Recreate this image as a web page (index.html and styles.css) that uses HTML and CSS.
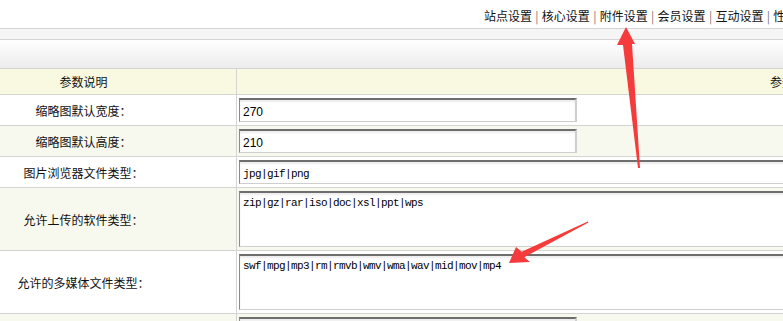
FILE: index.html
```html
<!DOCTYPE html>
<html lang="zh-CN">
<head>
    <meta charset="UTF-8">
    <title>附件设置</title>
    <link rel="stylesheet" href="styles.css">
</head>
<body>
    <div class="topbar">
        <div class="nav">
            <a href="#">站点设置</a><span class="sep">|</span><a href="#">核心设置</a><span class="sep">|</span><a href="#">附件设置</a><span class="sep">|</span><a href="#">会员设置</a><span class="sep">|</span><a href="#">互动设置</a><span class="sep">|</span><a href="#">性能选项</a>
        </div>
    </div>
    <div class="subbar"></div>
    <div class="toolbar"></div>
    <table class="config">
        <tr class="head">
            <td class="label">参数说明</td>
            <td class="value-head">参数值</td>
        </tr>
        <tr>
            <td class="label">缩略图默认宽度：</td>
            <td class="value"><input type="text" class="short" value="270"></td>
        </tr>
        <tr class="alt">
            <td class="label">缩略图默认高度：</td>
            <td class="value"><input type="text" class="short" value="210"></td>
        </tr>
        <tr>
            <td class="label">图片浏览器文件类型：</td>
            <td class="value"><input type="text" class="long mono" value="jpg|gif|png"></td>
        </tr>
        <tr class="alt">
            <td class="label">允许上传的软件类型：</td>
            <td class="value"><textarea class="mono">zip|gz|rar|iso|doc|xsl|ppt|wps</textarea></td>
        </tr>
        <tr>
            <td class="label">允许的多媒体文件类型：</td>
            <td class="value"><textarea class="mono">swf|mpg|mp3|rm|rmvb|wmv|wma|wav|mid|mov|mp4</textarea></td>
        </tr>
        <tr class="alt">
            <td class="label">附件大小限制：</td>
            <td class="value"><input type="text" class="short" value=""></td>
        </tr>
    </table>

    <!-- annotation arrows drawn over the page -->
    <svg class="marks" width="783" height="321" viewBox="0 0 783 321">
        <polygon points="626,27 635,44 632,44 640,168 638,168 623,45 617,45" fill="#f53b3b"/>
        <polygon points="509,263 516,247 521.7,251.8 587.8,221.6 588.4,222.6 524.3,257.2 530,262" fill="#f53b3b"/>
    </svg>
</body>
</html>
```

FILE: styles.css
```css
body {
    margin: 0;
    padding: 0;
    overflow: hidden;
    background: #fff;
    font-family: "Noto Sans CJK SC", "Liberation Sans", sans-serif;
    font-size: 12px;
    color: #111;
}

.topbar {
    height: 28px;
    border-bottom: 1px solid #d4d4d4;
}

.nav {
    padding-left: 484px;
    padding-top: 1px;
    white-space: nowrap;
    line-height: 29px;
}

.nav a {
    color: #111;
    text-decoration: none;
}

.nav .sep {
    color: #777;
    margin: 0 3.3px;
}

.subbar {
    height: 10px;
    background: #f5f5f5;
    border-bottom: 1px solid #d4d4d4;
}

.toolbar {
    height: 28px;
    background: linear-gradient(#ffffff, #ececec);
    border-bottom: 1px solid #d4d4d4;
}

.config {
    border-collapse: collapse;
    margin-left: -70px;
    width: 1410px;
}

.config td {
    border: 1px solid #d4d4d4;
    padding: 3px;
    vertical-align: middle;
}

.config tr:first-child td {
    border-top: none;
}

.config .label {
    width: 299px;
    text-align: center;
    color: #111;
}

.config .head td {
    height: 19px;
    background: #f9f9e1;
    text-align: center;
}

.config .alt td {
    background: #f8f9ee;
}

.config .value {
    padding: 3px 3px 3px 2px;
}

input,
textarea {
    box-sizing: border-box;
    display: block;
    margin: 0;
    border: 1px solid #cfcfcf;
    border-top: 2px solid #6e6e6e;
    border-left: 1px solid #8a8a8a;
    border-right: 2px solid #cfcfcf;
    box-shadow: inset 0 2px 2px #ececec;
    background: #fff;
    color: #000;
    font-family: "Liberation Sans", Arial, sans-serif;
    font-size: 12px;
    padding: 2px 3px 0;
}

input {
    height: 24px;
}

input.short {
    width: 338px;
}

input.long {
    width: 600px;
}

textarea {
    width: 600px;
    height: 56px;
    resize: none;
    padding-top: 4px;
}

.mono {
    font-family: "Liberation Mono", "DejaVu Sans Mono", monospace;
    font-size: 11px;
    letter-spacing: -0.6px;
}

.marks {
    position: absolute;
    left: 0;
    top: 0;
    pointer-events: none;
}
```
